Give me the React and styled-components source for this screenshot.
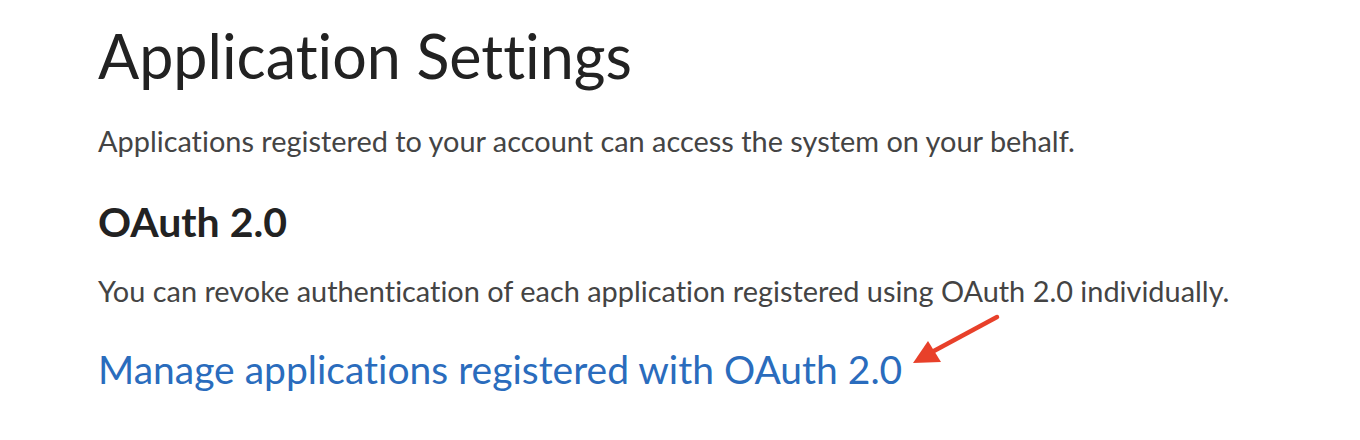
import React from "react";
import styled, { createGlobalStyle } from "styled-components";

const Global = createGlobalStyle`
  html, body { margin: 0; padding: 0; background: #fff; }
  body {
    font-family: Lato, "Open Sans", sans-serif;
    font-variant-ligatures: none;
    -webkit-font-smoothing: antialiased;
  }
`;

const Page = styled.main`
  padding: 19px 0 0 98px;
  display: flex;
  flex-direction: column;
  align-items: flex-start;
`;

const Title = styled.h1`
  margin: 0;
  font-size: 61px;
  font-weight: 400;
  line-height: 73px;
  color: #222;
`;

const Text = styled.p`
  margin: ${(p) => p.$mt || 0}px 0 0;
  font-size: 28.9px;
  line-height: 40px;
  color: #444;
`;

const Heading = styled.h2`
  margin: 36px 0 0;
  font-size: 41px;
  font-weight: 700;
  line-height: 50px;
  color: #222;
`;

const LinkRow = styled.div`
  position: relative;
  margin-top: 34px;
`;

const Link = styled.a`
  display: block;
  font-size: 39px;
  line-height: 48px;
  color: #2a6cbd;
  text-decoration: none;
`;

const Arrow = styled.svg`
  position: absolute;
  left: 810px;
  top: -35px;
  width: 95px;
  height: 60px;
  overflow: visible;
`;

export default function App() {
  return (
    <>
      <Global />
      <Page>
        <Title>Application Settings</Title>
        <Text $mt={29}>Applications registered to your account can access the system on your behalf.</Text>
        <Heading>OAuth 2.0</Heading>
        <Text $mt={24}>You can revoke authentication of each application registered using OAuth 2.0 individually.</Text>
        <LinkRow>
          <Link href="#">Manage applications registered with OAuth 2.0</Link>
          <Arrow viewBox="0 0 95 60">
            <line x1="89" y1="7" x2="24" y2="42" stroke="#e8402a" strokeWidth="4.5" strokeLinecap="round" />
            <polygon points="5,53 20,31 33,52" fill="#e8402a" />
          </Arrow>
        </LinkRow>
      </Page>
    </>
  );
}
